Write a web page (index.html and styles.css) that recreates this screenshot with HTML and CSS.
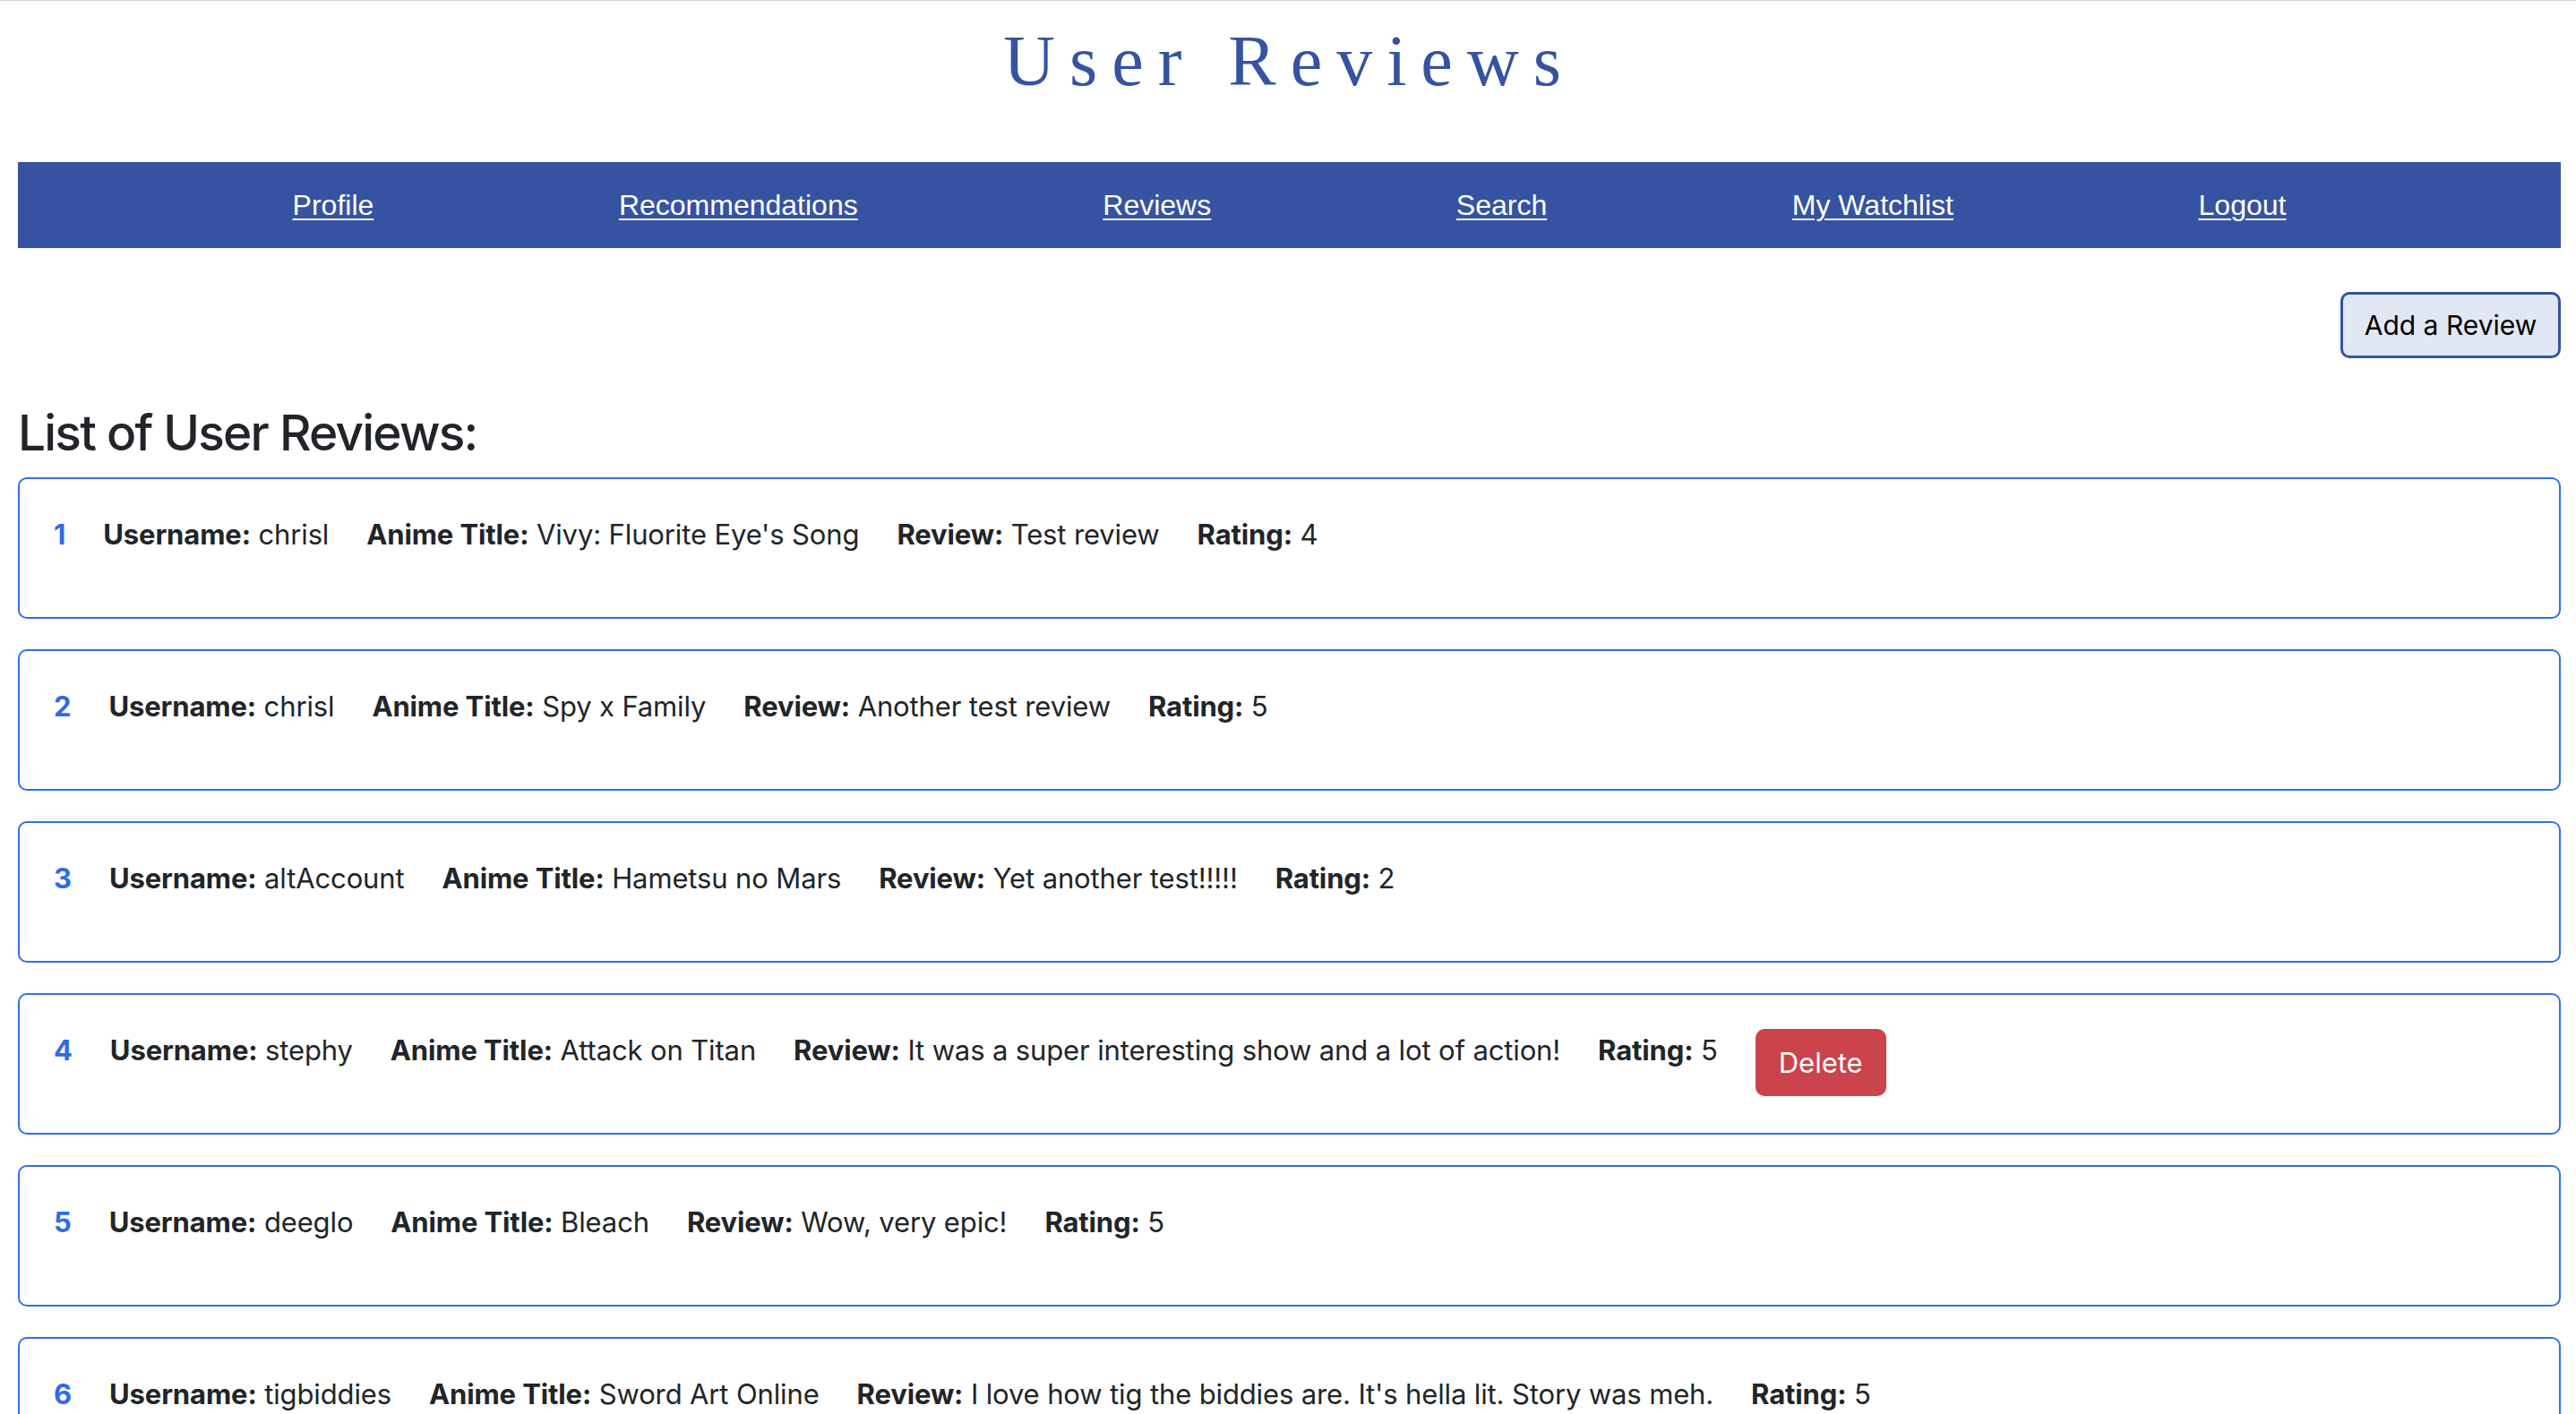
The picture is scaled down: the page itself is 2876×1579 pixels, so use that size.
FILE: index.html
```html
<!DOCTYPE html>
<html lang="en">
<head>
<meta charset="utf-8">
<title>User Reviews</title>
<link rel="stylesheet" href="styles.css">
</head>
<body>
<div class="topline"></div>
<div class="page">
  <h1 class="title">User Reviews</h1>
  <nav class="navbar">
    <a href="#">Profile</a>
    <a href="#">Recommendations</a>
    <a href="#">Reviews</a>
    <a href="#">Search</a>
    <a href="#">My Watchlist</a>
    <a href="#">Logout</a>
  </nav>
  <div class="actions">
    <button class="add-btn">Add a Review</button>
  </div>
  <h3 class="list-heading">List of User Reviews:</h3>
  <div class="cards">
    <div class="card">
      <div class="row">
        <span class="num">1</span>
        <span><b>Username:</b> chrisl</span>
        <span><b>Anime Title:</b> Vivy: Fluorite Eye's Song</span>
        <span><b>Review:</b> Test review</span>
        <span><b>Rating:</b> 4</span>
      </div>
    </div>
    <div class="card">
      <div class="row">
        <span class="num">2</span>
        <span><b>Username:</b> chrisl</span>
        <span><b>Anime Title:</b> Spy x Family</span>
        <span><b>Review:</b> Another test review</span>
        <span><b>Rating:</b> 5</span>
      </div>
    </div>
    <div class="card">
      <div class="row">
        <span class="num">3</span>
        <span><b>Username:</b> altAccount</span>
        <span><b>Anime Title:</b> Hametsu no Mars</span>
        <span><b>Review:</b> Yet another test!!!!!</span>
        <span><b>Rating:</b> 2</span>
      </div>
    </div>
    <div class="card">
      <div class="row">
        <span class="num">4</span>
        <span><b>Username:</b> stephy</span>
        <span><b>Anime Title:</b> Attack on Titan</span>
        <span><b>Review:</b> It was a super interesting show and a lot of action!</span>
        <span><b>Rating:</b> 5</span>
        <button class="del-btn">Delete</button>
      </div>
    </div>
    <div class="card">
      <div class="row">
        <span class="num">5</span>
        <span><b>Username:</b> deeglo</span>
        <span><b>Anime Title:</b> Bleach</span>
        <span><b>Review:</b> Wow, very epic!</span>
        <span><b>Rating:</b> 5</span>
      </div>
    </div>
    <div class="card">
      <div class="row">
        <span class="num">6</span>
        <span><b>Username:</b> tigbiddies</span>
        <span><b>Anime Title:</b> Sword Art Online</span>
        <span><b>Review:</b> I love how tig the biddies are. It's hella lit. Story was meh.</span>
        <span><b>Rating:</b> 5</span>
      </div>
    </div>
  </div>
</div>
</body>
</html>
```
FILE: styles.css
```css
html, body {
  margin: 0;
  padding: 0;
  background: #ffffff;
}
body {
  font-family: Inter, "Noto Sans", sans-serif;
  color: #212529;
}
.topline {
  height: 1px;
  background: #d9ccd2;
}
.page {
  padding: 0 17px 0 20px;
}
.title {
  margin: 21px 0 0 0;
  font-family: "Liberation Serif", "Times New Roman", serif;
  font-weight: 400;
  font-size: 80px;
  line-height: 92px;
  letter-spacing: 16px;
  color: #3553a0;
  text-align: center;
}
.navbar {
  margin-top: 67px;
  height: 96px;
  background: #3553a0;
  display: flex;
  justify-content: space-evenly;
  align-items: center;
  padding: 0 33px;
}
.navbar a {
  font-family: "Liberation Sans", Arial, sans-serif;
  font-size: 32px;
  color: #ffffff;
  text-decoration: underline;
  text-decoration-thickness: 2px;
  text-underline-offset: 4px;
}
.actions {
  display: flex;
  justify-content: flex-end;
  margin-top: 49px;
}
.add-btn {
  width: 246px;
  height: 74px;
  box-sizing: border-box;
  background: #e1e7f3;
  border: 3px solid #3553a0;
  border-radius: 10px;
  font-family: Inter, "Noto Sans", sans-serif;
  font-size: 30px;
  color: #000000;
  padding: 0;
}
.list-heading {
  margin: 50px 0 17px 0;
  font-size: 55px;
  line-height: 66px;
  font-weight: 500;
  letter-spacing: -1.8px;
  color: #212529;
}
.cards {
  display: flex;
  flex-direction: column;
  gap: 34px;
}
.card {
  border: 2px solid #3070e8;
  border-radius: 10px;
  padding: 38px 38px 40px 38px;
}
.row {
  display: flex;
  align-items: flex-start;
  gap: 42px;
  min-height: 76px;
  font-size: 31px;
  line-height: 48px;
  letter-spacing: -0.13px;
}
.row b {
  font-weight: 700;
}
.num {
  color: #2f6be6;
  font-weight: 700;
}
.del-btn {
  height: 75px;
  padding: 0 26px;
  background: #cb444b;
  color: #ffffff;
  border: none;
  border-radius: 10px;
  font-family: Inter, "Noto Sans", sans-serif;
  font-size: 31px;
}
```
